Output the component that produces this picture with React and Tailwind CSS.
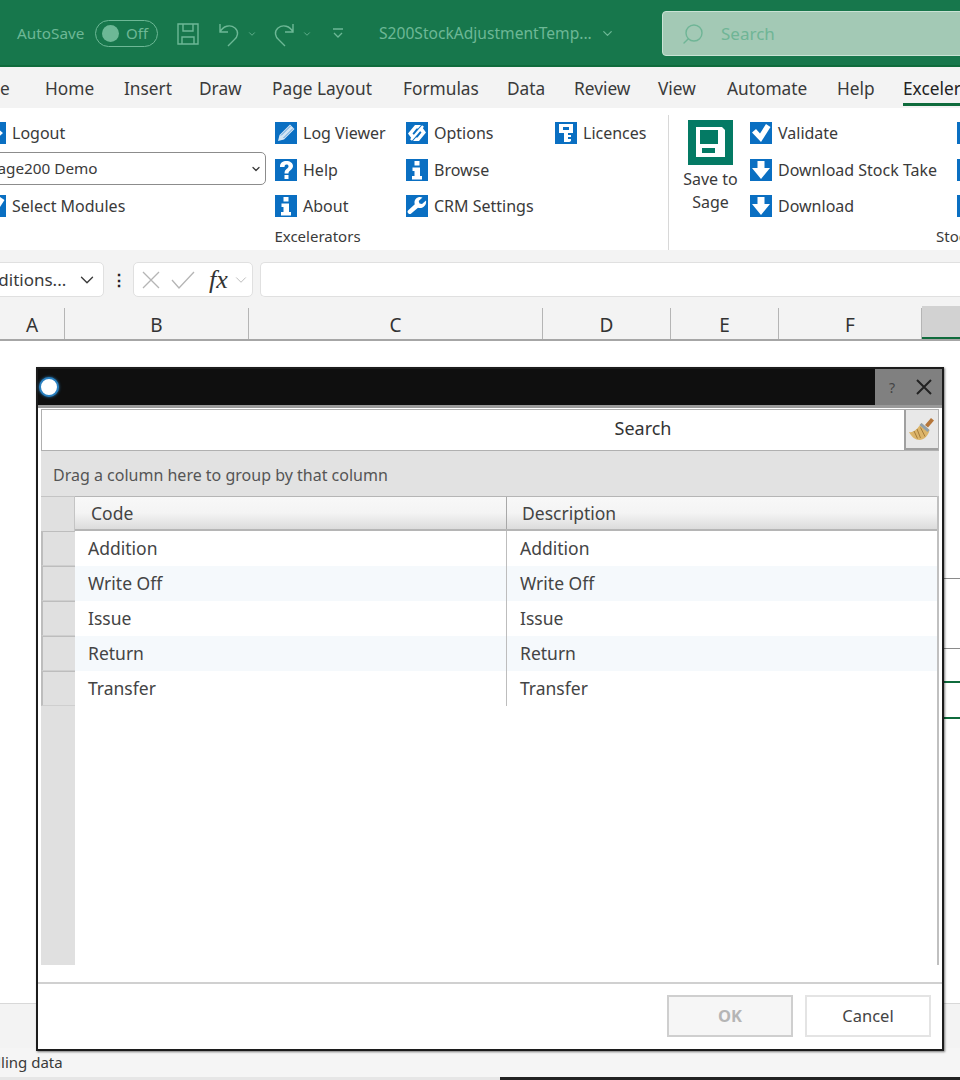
import React from 'react';
import { ChevronDown, Search } from 'lucide-react';

const tabs = [
  ['File', 'w-[63px]'],
  ['Home', 'w-[79px]'],
  ['Insert', 'w-[75px]'],
  ['Draw', 'w-[73px]'],
  ['Page Layout', 'w-[131px]'],
  ['Formulas', 'w-[104px]'],
  ['Data', 'w-[67px]'],
  ['Review', 'w-[84px]'],
  ['View', 'w-[69px]'],
  ['Automate', 'w-[110px]'],
  ['Help', 'w-[66px]'],
];

const columns = [
  ['A', 'w-[65px]'],
  ['B', 'w-[184px]'],
  ['C', 'w-[294px]'],
  ['D', 'w-[128px]'],
  ['E', 'w-[108px]'],
  ['F', 'w-[143px]'],
];

const rows = ['Addition', 'Write Off', 'Issue', 'Return', 'Transfer'];

const glyphs = {
  pencil: (
    <>
      <path d="M3 19l1.500-6L15 2.500 19.500 7 9 17.500 3 19z" fill="#d5e6f5" />
      <path d="M6 13.500l9.500-9.500M8.500 16L18 6.500" stroke="#0a6fc2" strokeWidth="0.600" />
    </>
  ),
  help: <path d="M5 7.500C5 3.500 8 2 11.500 2S18 4 18 7c0 4-4.500 4-4.500 7.500h-4C9.500 9.500 13.500 10 13.500 7.300c0-1.200-.8-1.800-2-1.800S9.500 6.300 9.500 8H5zm4.500 8.500h4v4h-4v-4z" fill="#fff" />,
  info: <path d="M8.500 2h5v4.500h-5V2zM6.500 8.500H14v8.500h2v3.500H6V17h2.500v-5h-2V8.500z" fill="#fff" />,
  options: (
    <>
      <path d="M2 11.500L9 3h6l-3 3.500H10.500L6.500 11.500l2 2L6 17l-4-5.500zM20 10.500L13 19H7l3-3.500h1.500l4-5-2-2L16 5l4 5.500z" fill="#fff" />
      <path d="M5 18L17 4" stroke="#fff" strokeWidth="2.500" />
    </>
  ),
  wrench: <path d="M20 5.500l-4 3.500-2.500-.5-.8-2.500L16.500 2.500C13 .8 8.500 3 8.500 7.500c0 .7.100 1.200.3 1.800L2 15.500c-1.500 1.700 1.200 4.800 3.200 3L12 12.800c4.500 1.500 9-2.500 8-7.300z" fill="#fff" />,
  key: <path d="M4 2h14v9h-5v2h3v2h-3v2h3v2l-1.500 1H9v-9H4V2zm4 3v3h6V5H8z" fill="#fff" />,
  check: <path d="M2 10.500L6 7l4 4.500L16 2l4.500 3L11 20 2 10.500z" fill="#fff" />,
  down: <path d="M7.500 2h7v7h5.500L11 20 2 9h5.500V2z" fill="#fff" />,
  logout: <path d="M3 8h8V4l8 7-8 7v-4H3V8z" fill="#fff" />,
  plain: <rect x="4" y="6" width="14" height="10" fill="#fff" />,
};

const BlueIcon = ({ name }) => (
  <svg width="22" height="22" viewBox="0 0 22 22" className="shrink-0">
    <rect width="22" height="22" fill="#0a6fc2" />
    {glyphs[name]}
  </svg>
);

const RibbonItem = ({ icon, label }) => (
  <div className="flex h-[36.5px] items-center gap-[6px] whitespace-nowrap">
    <BlueIcon name={icon} />
    <span>{label}</span>
  </div>
);

const Floppy = ({ color }) => (
  <svg width="24" height="24" viewBox="0 0 24 24" fill="none" stroke={color} strokeWidth="1.400" className="shrink-0">
    <path d="M2 2h20v20H2zM7 2v7h10V2M6 22v-7h12v7" />
  </svg>
);

const UndoArrow = ({ flip }) => (
  <svg width="22" height="26" viewBox="0 0 22 26" fill="none" stroke="currentColor" strokeWidth="1.400" className={`shrink-0 ${flip ? '-scale-x-100' : ''}`}>
    <path d="M2 3v8h8M2 11C5 5 12 3 17 7c4 3.500 3 9-1 12l-6 6" />
  </svg>
);

const SaveIcon = () => (
  <svg width="45" height="45" viewBox="0 0 45 45" className="shrink-0">
    <rect width="45" height="45" fill="#047a64" />
    <path d="M8 7h26l3 3v27H8z" fill="#fff" />
    <path d="M12 10h18v14H12zM14 28h13v5H14z" fill="#047a64" />
  </svg>
);

const Broom = () => (
  <svg width="28" height="28" viewBox="0 0 28 28">
    <path d="M17 10l6-7 3 2.500-6 7-3-2.500z" fill="#b5763a" />
    <path d="M13.500 8l8 7c-1 6-6 10-10 10-4 0-8-3-10.500-8 5 1 9-4 12.500-9z" fill="#dcb56a" />
    <path d="M9 14l3.500 9M12.500 12.500l4.500 9M6 16l3.500 7.500" stroke="#a67c3a" strokeWidth="1" />
    <path d="M13.500 8l8 7-2 2-8-7 2-2z" fill="#8fa0ad" />
  </svg>
);

const App = () => {
  return (
    <div className="relative flex h-[1080px] w-full flex-col overflow-hidden bg-white font-['Noto_Sans',sans-serif] text-[16px] text-[#3a3a3a]">
      {/* title bar */}
      <div className="flex h-[67px] shrink-0 items-center overflow-hidden border-b-2 border-[#0f6b3c] bg-[#17774c] pt-[2px] pl-[17px] whitespace-nowrap text-[#6db896]">
        <span className="w-[68px] shrink-0 text-[15.300px]">AutoSave</span>
        <div className="ml-[10px] flex h-[27px] w-[63px] shrink-0 items-center rounded-full border border-[#6db896] pl-[6px]">
          <div className="h-[17px] w-[17px] rounded-full bg-[#6db896]" />
          <span className="ml-[7px] text-[15px]">Off</span>
        </div>
        <div className="ml-[18px] shrink-0"><Floppy color="#6db896" /></div>
        <div className="ml-[18px] shrink-0"><UndoArrow /></div>
        <ChevronDown size={10} strokeWidth={2} className="ml-[7px] shrink-0" />
        <div className="ml-[16px] shrink-0"><UndoArrow flip /></div>
        <ChevronDown size={10} strokeWidth={2} className="ml-[7px] shrink-0" />
        <svg width="10" height="11" viewBox="0 0 10 11" fill="none" stroke="currentColor" strokeWidth="1.300" className="ml-[21px] shrink-0">
          <path d="M0 1h10M1 5l4 4 4-4" />
        </svg>
        <span className="ml-[36px] w-[215px] shrink-0 text-[15.600px]">S200StockAdjustmentTemp...</span>
        <ChevronDown size={15} className="ml-[6px] shrink-0" />
        <div className="ml-[47px] flex h-[45px] w-[320px] shrink-0 items-center rounded-[4px] border border-[#c9e3d5] bg-[#a3c9b5] pl-[18px] text-[#6fb596]">
          <Search size={24} strokeWidth={1.400} className="-scale-x-100" />
          <span className="ml-[16px] text-[17px]">Search</span>
        </div>
      </div>

      {/* tabs */}
      <div className="flex h-[41px] shrink-0 items-center overflow-hidden bg-[#f3f3f3] pt-[3px] text-[17.300px] whitespace-nowrap">
        <div className="ml-[-18px] flex shrink-0">
          {tabs.map(([label, width]) => (
            <span key={label} className={`${width} shrink-0`}>{label}</span>
          ))}
        </div>
        <div className="relative flex h-full shrink-0 items-center text-[#222]">
          <span>Excelerators</span>
          <div className="absolute bottom-[2px] left-0 h-[3px] w-full bg-[#0f6b3c]" />
        </div>
      </div>

      {/* ribbon */}
      <div className="flex h-[142px] shrink-0 overflow-hidden bg-white pt-[7px]">
        <div className="ml-[-33px] flex w-[702px] shrink-0 flex-col border-r border-[#d8d8d8]">
          <div className="flex h-[110px] shrink-0">
            <div className="ml-[17px] w-[283px] shrink-0">
              <RibbonItem icon="logout" label="Logout" />
              <div className="flex h-[36.500px] items-center">
                <div className="mb-[2px] flex h-[33px] w-[282px] items-center justify-between rounded-[5px] border border-[#8c8c8c] pr-[3px] pl-[4px] text-[15.300px]">
                  <span>Sage200 Demo</span>
                  <ChevronDown size={12} strokeWidth={2.500} />
                </div>
              </div>
              <RibbonItem icon="check" label="Select Modules" />
            </div>
            <div className="ml-[8px] w-[131px] shrink-0">
              <RibbonItem icon="pencil" label="Log Viewer" />
              <RibbonItem icon="help" label="Help" />
              <RibbonItem icon="info" label="About" />
            </div>
            <div className="w-[149px] shrink-0">
              <RibbonItem icon="options" label="Options" />
              <RibbonItem icon="info" label="Browse" />
              <RibbonItem icon="wrench" label="CRM Settings" />
            </div>
            <div className="shrink-0">
              <RibbonItem icon="key" label="Licences" />
            </div>
          </div>
          <div className="mt-[-0.500px] text-center text-[15px]">Excelerators</div>
        </div>
        <div className="flex shrink-0 flex-col">
          <div className="flex h-[110px] shrink-0">
            <div className="ml-[15px] flex w-[53px] shrink-0 flex-col items-center pt-[4.500px] text-center leading-[23px]">
              <SaveIcon />
              <span className="mt-[3.500px] whitespace-nowrap">Save to</span>
              <span>Sage</span>
            </div>
            <div className="ml-[13px] w-[207px] shrink-0">
              <RibbonItem icon="check" label="Validate" />
              <RibbonItem icon="down" label="Download Stock Take" />
              <RibbonItem icon="down" label="Download" />
            </div>
            <div className="shrink-0">
              <RibbonItem icon="plain" label="" />
              <RibbonItem icon="plain" label="" />
              <RibbonItem icon="plain" label="" />
            </div>
          </div>
          <div className="mt-[-0.500px] ml-[267px] text-[15px] whitespace-nowrap">Stock Adjustment</div>
        </div>
      </div>

      {/* formula bar */}
      <div className="flex h-[58px] shrink-0 items-start bg-[#f3f3f3] pt-[12px]">
        <div className="ml-[-30px] flex h-[35px] w-[134px] shrink-0 items-center justify-between rounded-[5px] border border-[#e0e0e0] bg-white pr-[5px] pl-[6px] text-[17px]">
          <span className="whitespace-nowrap">Additions...</span>
          <ChevronDown size={22} strokeWidth={1.500} className="shrink-0" />
        </div>
        <span className="flex h-[35px] w-[29px] shrink-0 items-center justify-center font-bold text-[#222]">⋮</span>
        <div className="flex h-[35px] w-[120px] shrink-0 items-center rounded-[5px] border border-[#e0e0e0] bg-white pl-[6px] text-[#b5b5b5]">
          <svg width="22" height="22" viewBox="0 0 22 22" fill="none" stroke="currentColor" strokeWidth="1.300"><path d="M3 3l16 16M19 3L3 19" /></svg>
          <svg width="26" height="22" viewBox="0 0 26 22" fill="none" stroke="currentColor" strokeWidth="1.300" className="ml-[8px]"><path d="M2 11l7 8L24 3" /></svg>
          <span className="ml-[13px] font-['Liberation_Serif',serif] text-[26px] leading-none text-[#333] italic">fx</span>
          <ChevronDown size={18} strokeWidth={1.200} className="ml-[4px]" />
        </div>
        <div className="ml-[7px] h-[35px] flex-1 rounded-l-[5px] border border-r-0 border-[#e0e0e0] bg-white" />
      </div>

      {/* column headers */}
      <div className="flex h-[33px] shrink-0 items-end border-b-2 border-[#a6a6a6] bg-[#f3f3f3] text-[19px] text-[#333]">
        {columns.map(([label, width]) => (
          <div key={label} className={`${width} flex h-[31px] shrink-0 items-center justify-center border-r border-[#b5b5b5] pt-[4px] leading-none`}>{label}</div>
        ))}
        <div className="h-[33px] flex-1 border-b-2 border-[#0f6b3c] bg-[#d2d2d2]" />
      </div>

      {/* sheet */}
      <div className="relative flex-1 bg-white">
        <div className="absolute top-[237px] right-0 h-px w-[20px] bg-[#8a8a8a]" />
        <div className="absolute top-[307px] right-0 h-px w-[20px] bg-[#8a8a8a]" />
        <div className="absolute top-[340px] right-0 h-[2px] w-[20px] bg-[#0f6b3c]" />
        <div className="absolute top-[376px] right-0 h-[2px] w-[20px] bg-[#0f6b3c]" />
      </div>

      {/* sheet tabs + status */}
      <div className="h-[45px] shrink-0 border-t border-[#d8d8d8] bg-[#f3f3f3]" />
      <div className="flex h-[29px] shrink-0 items-center overflow-hidden bg-[#f5f5f5] text-[15px]">
        <span className="ml-[-37px] whitespace-nowrap">Handling data</span>
      </div>
      <div className="flex h-[3px] shrink-0">
        <div className="w-[500px] bg-[#e6e6e6]" />
        <div className="flex-1 bg-[#222]" />
      </div>

      {/* dialog */}
      <div className="absolute top-[367px] left-[36px] flex h-[684px] w-[908px] flex-col border-2 border-[#1c1c1c] bg-white shadow-[1px_1px_2px_rgba(0,0,0,0.5)]">
        <div className="flex h-[39px] shrink-0 items-stretch justify-between border-b-[3px] border-[#9a9a9a] bg-[#0f0f0f]">
          <div className="ml-px flex items-center">
            <div className="h-[20px] w-[20px] rounded-full border-2 border-[#2a80c0] bg-white shadow-[0_0_3px_#2a80c0]" />
          </div>
          <div className="flex w-[67px] items-center justify-end bg-[#808080] pr-[9px] text-[#222]">
            <span className="mr-[20px] text-[14px] text-[#444]">?</span>
            <svg width="18" height="18" viewBox="0 0 18 18" fill="none" stroke="currentColor" strokeWidth="2"><path d="M2 2l14 14M16 2L2 16" /></svg>
          </div>
        </div>

        <div className="flex flex-1 flex-col px-[3px] pt-px">
          <div className="flex h-[42px] shrink-0 border border-[#b0b0b0]">
            <div className="flex flex-1 items-center justify-center pb-[3px] pl-[340px] text-[18px] text-[#333]">Search</div>
            <div className="flex w-[34px] shrink-0 items-center justify-center border-b-2 border-l-2 border-[#a0a0a0] bg-[#e8e8e8]">
              <Broom />
            </div>
          </div>
          <div className="flex h-[45px] shrink-0 items-center bg-[#e2e2e2] pt-[3px] pl-[12px] text-[#555]">
            Drag a column here to group by that column
          </div>
          <div className="flex h-[469px] shrink-0 border-r-2 border-[#c0c0c0] text-[17.500px]">
            <div className="flex w-[34px] shrink-0 flex-col bg-[#e0e0e0]">
              <div className="h-[35px] shrink-0 border-t border-r border-[#c4c4c4]" />
              {rows.map((row) => (
                <div key={row} className="h-[35px] shrink-0 border-t border-b border-l-2 border-[#bdbdbd] border-b-[#cfcfcf]" />
              ))}
            </div>
            <div className="flex flex-1 flex-col">
              <div className="flex h-[35px] shrink-0 border-t border-b-2 border-[#b5b5b5] bg-gradient-to-b from-[#f8f8f8] via-[#f4f4f4] to-[#dcdcdc] text-[#444]">
                <div className="flex w-[432px] shrink-0 items-center border-r border-[#a8a8a8] pl-[16px]">Code</div>
                <div className="flex flex-1 items-center pl-[15px]">Description</div>
              </div>
              {rows.map((row, index) => (
                <div key={row} className={`flex h-[35px] shrink-0 text-[#444] ${index % 2 === 1 ? 'bg-[#f5f9fc]' : 'bg-white'}`}>
                  <div className="flex w-[432px] shrink-0 items-center border-r border-[#bdbdbd] pl-[13px]">{row}</div>
                  <div className="flex flex-1 items-center pl-[13px]">{row}</div>
                </div>
              ))}
            </div>
          </div>
        </div>

        <div className="flex h-[67px] shrink-0 items-start justify-end gap-[12px] border-t-2 border-[#d0d0d0] pt-[11px] pr-[11px] text-[16.500px]">
          <div className="flex h-[42px] w-[126px] items-center justify-center border-2 border-[#cfcfcf] bg-[#f6f6f6] font-bold text-[#b5b5b5]">OK</div>
          <div className="flex h-[42px] w-[126px] items-center justify-center border-2 border-[#e4e4e4] bg-white text-[#444]">Cancel</div>
        </div>
      </div>
    </div>
  );
};

export default App;
